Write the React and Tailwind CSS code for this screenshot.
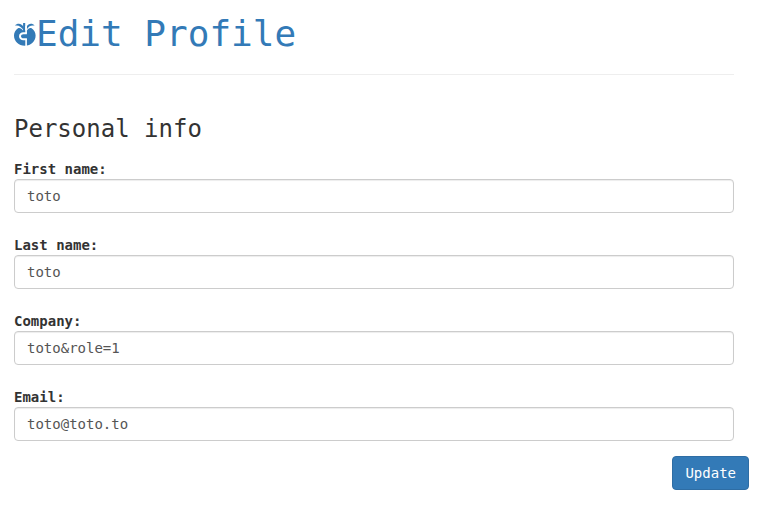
export default function App() {
  const fields = [
    { id: 'first', label: 'First name:', value: 'toto' },
    { id: 'last', label: 'Last name:', value: 'toto' },
    { id: 'company', label: 'Company:', value: 'toto&role=1' },
    { id: 'email', label: 'Email:', value: 'toto@toto.to' },
  ];
  return (
    <main className="pl-[14px] pr-7 pt-[14px] font-['DejaVu_Sans_Mono',monospace] text-sm leading-5 text-[#333333]">
      <header className="mr-[15px] border-b border-[#eeeeee] pb-5">
        <h1 className="flex items-center text-[36px] leading-10 text-[#337ab7]">
          <svg className="h-6 w-[22px]" viewBox="0 0 22 24" fill="none" aria-hidden="true">
            <path d="M4 6.2C1.4 8 0 10.4 0 13.6c0 6 4.6 10.2 10.8 10.2s10.8-4.2 10.8-10.2c0-3.2-1.4-5.6-4-7.4C15.6 5.4 14 6.6 13 8.5H9C7.6 6.6 6 5.4 4 6.2Z" fill="currentColor" />
            <path d="M1 3.6C3 .8 8 1 9.8 5.4V8.5C7.6 5 4.6 2.8 1 3.6ZM20.6 3.6C18.6 .8 14.4 1 12.8 4.4v3C14.2 4.6 17 2.8 20.6 3.6Z" fill="currentColor" />
            <path d="M9.1 1h2.1v9.6H9.1Z" fill="currentColor" />
            <path d="M12.1 4v7.2M12.1 17v7" stroke="white" strokeWidth="1.6" />
            <path d="M12.9 11.2H10.2C4.6 10.4 4.6 18 10.2 17.2h2.7" stroke="white" strokeWidth="2" />
          </svg>
          Edit Profile
        </h1>
      </header>
      <form className="pt-[41px]" onSubmit={(e) => e.preventDefault()}>
        <h2 className="mb-[17px] text-2xl leading-[26px]">Personal info</h2>
        <div className="mr-[15px] flex flex-col gap-[22px]">
          {fields.map((f) => (
            <div key={f.id} className="flex flex-col">
              <label htmlFor={f.id} className="font-bold">{f.label}</label>
              <input
                id={f.id}
                defaultValue={f.value}
                className="h-[34px] w-full rounded-[4px] border border-[#cccccc] bg-white px-3 text-[#555555] shadow-[inset_0_1px_1px_rgba(0,0,0,0.075)]"
              />
            </div>
          ))}
        </div>
        <div className="flex justify-end pt-[15px]">
          <button className="rounded-[4px] border border-[#2e6da4] bg-[#337ab7] px-3 py-[6px] text-white">Update</button>
        </div>
      </form>
    </main>
  );
}
